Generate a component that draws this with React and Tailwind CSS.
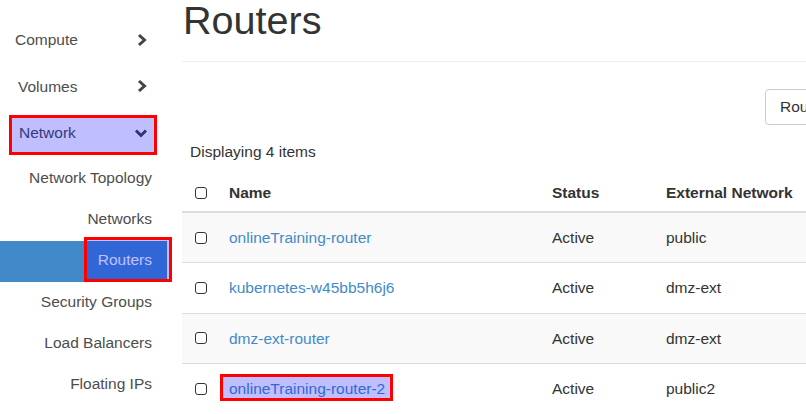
import React from 'react'

const topItems = [
  { label: 'Compute', pad: 'pl-[15px]' },
  { label: 'Volumes', pad: 'pl-[18px]' },
  { label: 'Network', pad: 'pl-[19px]', open: true },
]

const subItems = ['Network Topology', 'Networks', 'Routers', 'Security Groups', 'Load Balancers', 'Floating IPs']

const routers = [
  { name: 'onlineTraining-router', status: 'Active', net: 'public' },
  { name: 'kubernetes-w45bb5h6j6', status: 'Active', net: 'dmz-ext' },
  { name: 'dmz-ext-router', status: 'Active', net: 'dmz-ext' },
  { name: 'onlineTraining-router-2', status: 'Active', net: 'public2' },
]

function ChevronRight() {
  return (
    <svg width="12" height="14" viewBox="0 0 12 14">
      <path d="M3 2 L8.5 7 L3 12" fill="none" stroke="#444" strokeWidth="3" strokeLinejoin="miter" />
    </svg>
  )
}

function ChevronDown() {
  return (
    <svg width="14" height="10" viewBox="0 0 14 10">
      <path d="M2 2.5 L7 7.5 L12 2.5" fill="none" stroke="#444" strokeWidth="3" strokeLinejoin="miter" />
    </svg>
  )
}

function Checkbox() {
  return <span className="block w-[12px] h-[12px] rounded-[3px] border-[1.5px] border-[#333] bg-white" />
}

export default function App() {
  return (
    <div className="relative w-[806px] h-[414px] overflow-hidden bg-white font-[family-name:'Liberation_Sans',Arial,sans-serif] text-[15.5px] text-[#333]">
      <div className="flex w-[1000px]">
        {/* Sidebar */}
        <nav className="w-[167px] shrink-0 pt-[16.5px] text-[#4d4d4d]">
          {topItems.map((item) => (
            <div key={item.label} className={`flex items-center justify-between h-[46.5px] ${item.pad} pr-[19px]`}>
              <span>{item.label}</span>
              {item.open ? <ChevronDown /> : <ChevronRight />}
            </div>
          ))}
          <div className="mt-[2.5px]">
            {subItems.map((s) => (
              <div
                key={s}
                className={`flex items-center justify-end h-[41.2px] pr-[15px] pb-[3px] ${
                  s === 'Routers' ? 'bg-[#4289c9] text-white' : ''
                }`}
              >
                {s}
              </div>
            ))}
          </div>
        </nav>

        {/* Main */}
        <main className="ml-[15px] flex-1">
          <div className="h-[62px] pt-px border-b border-[#eee]">
            <h1 className="text-[39.6px] leading-[40px] -mt-px pl-px text-[#333]">Routers</h1>
          </div>

          <div className="h-[68px] flex items-start pt-[27px] pl-[583px]">
            <div className="h-[36px] px-[14px] flex items-center border border-[#ccc] rounded-[4px] whitespace-nowrap">
              Router Name =
            </div>
          </div>

          <div className="h-[44px] flex items-center pl-[8px]">Displaying 4 items</div>

          <div className="w-[800px]">
            <div className="flex items-center h-[39px] border-b-2 border-[#ddd] font-bold">
              <div className="w-[39px] pl-[13px]"><Checkbox /></div>
              <div className="w-[323px] pl-[8px]">Name</div>
              <div className="w-[114px] pl-[8px]">Status</div>
              <div className="flex-1 pl-[8px]">External Network</div>
            </div>
            {routers.map((r, i) => (
              <div
                key={r.name}
                className={`flex items-center h-[50.4px] border-b border-[#ddd] ${i % 2 === 0 ? 'bg-[#f9f9f9]' : 'bg-white'}`}
              >
                <div className="w-[39px] pl-[13px]"><Checkbox /></div>
                <div className="w-[323px] pl-[8px] text-[#428bca]">{r.name}</div>
                <div className="w-[114px] pl-[8px]">{r.status}</div>
                <div className="flex-1 pl-[8px]">{r.net}</div>
              </div>
            ))}
          </div>
        </main>
      </div>

      {/* Annotation boxes */}
      <div className="absolute left-[9px] top-[115px] w-[148px] h-[40px] border-[3px] border-[#ff0000] bg-[rgba(0,0,255,0.25)]" />
      <div className="absolute left-[84px] top-[237px] w-[88px] h-[45px] border-[3px] border-[#ff0000] bg-[rgba(0,0,255,0.25)]" />
      <div className="absolute left-[220px] top-[374px] w-[173px] h-[27px] border-[3px] border-[#ff0000] bg-[rgba(0,0,255,0.25)]" />
    </div>
  )
}
